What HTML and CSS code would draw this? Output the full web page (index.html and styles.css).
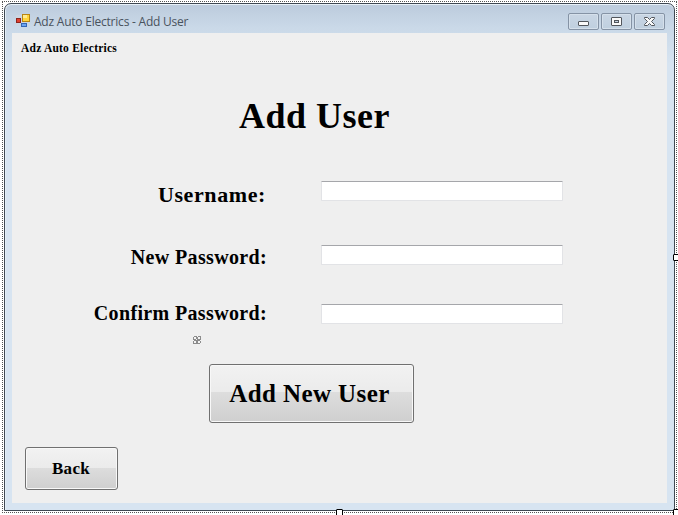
FILE: index.html
```html
<!DOCTYPE html>
<html lang="en">
<head>
<meta charset="utf-8">
<title>Adz Auto Electrics - Add User</title>
<link rel="stylesheet" href="styles.css">
</head>
<body>
<div class="designer">
  <main class="window">
    <header class="titlebar">
      <svg class="app-icon" width="14" height="14" viewBox="0 0 14 14" shape-rendering="crispEdges">
        <rect x="0" y="1" width="13" height="11" fill="#cbd6e2"/>
        <rect x="0" y="4" width="5" height="5" fill="#8e241c"/>
        <rect x="1" y="5" width="3" height="3" fill="#e04030"/>
        <rect x="6" y="0" width="8" height="8" fill="#b98512"/>
        <rect x="7" y="1" width="6" height="6" fill="#ffd43b"/>
        <rect x="7" y="1" width="4" height="3" fill="#ffeb91"/>
        <rect x="5" y="9" width="6" height="4" fill="#3566b5"/>
        <rect x="6" y="10" width="4" height="2" fill="#6ba4f0"/>
      </svg>
      <h1 class="caption">Adz Auto Electrics - Add User</h1>
      <div class="controls">
        <span class="control"><svg width="29" height="15" viewBox="0 0 29 15"><rect x="9.500" y="7.500" width="10" height="4" rx=".5" fill="#fafafa" stroke="#52565c"/></svg></span>
        <span class="control"><svg width="29" height="15" viewBox="0 0 29 15"><rect x="9.500" y="3.500" width="10" height="8" rx=".5" fill="#fafafa" stroke="#52565c"/><rect x="12.500" y="6.500" width="4" height="2" fill="#c5d2e0" stroke="#52565c"/></svg></span>
        <span class="control"><svg width="29" height="15" viewBox="0 0 29 15"><path d="M9.500 3.500h3l2 2 2-2h3v1l-3 3 3 3v1h-3l-2-2-2 2h-3v-1l3-3-3-3z" fill="#fafafa" stroke="#52565c"/></svg></span>
      </div>
    </header>
    <section class="client">
      <div class="brand">Adz Auto Electrics</div>
      <h2 class="heading">Add User</h2>
      <form class="form">
        <div class="row"><label class="label label-user" for="user">Username:</label><input class="field" id="user" type="text"></div>
        <div class="row row-new"><label class="label" for="pass">New Password:</label><input class="field" id="pass" type="password"></div>
        <div class="row row-confirm"><label class="label" for="confirm">Confirm Password:</label><input class="field" id="confirm" type="password"></div>
        <svg class="move" width="8" height="8" viewBox="0 0 8 8" shape-rendering="crispEdges"><path d="M1 0h7v7h-1v1h-7v-7h1z" fill="#8c8c8c"/><path d="M1 1h2v2h-2zM5 1h2v2h-2zM1 5h2v2h-2zM5 5h2v2h-2zM3 3h1v1h-1zM4 0h1v1h-1zM0 4h1v1h-1zM7 4h1v1h-1z" fill="#f4f4f4"/></svg>
        <button class="btn btn-add" type="button">Add New User</button>
        <button class="btn btn-back" type="button">Back</button>
      </form>
    </section>
  </main>
  <i class="handle handle-right"></i>
  <i class="handle handle-bottom"></i>
  <i class="handle handle-corner"></i>
</div>
</body>
</html>
```
FILE: styles.css
```css
* { box-sizing: border-box; }
body { margin: 0; width: 678px; height: 515px; overflow: hidden; background: #fff; }
.designer {
  position: relative;
  width: 675px;
  height: 512px;
  margin: 1px 0 0 2px;
  padding: 1px;
  border: 1px dotted #555;
  display: flow-root;
}
.window {
  width: 671px;
  height: 508px;
  border: 1px solid #3f4852;
  border-radius: 7px 7px 0 0;
  padding: 0 7px 7px;
  background: linear-gradient(#bccbdc 0, #cad9e8 24px, #d7e4f1 60px);
  box-shadow: inset 0 1px #e9f1f8, inset 1px 0 #e4eef6;
}
.titlebar { height: 29px; display: flex; align-items: flex-start; }
.app-icon { margin: 10px 0 0 4px; }
.caption {
  margin: 9px 0 0 4px;
  font: 12px/17px "Open Sans", sans-serif;
  letter-spacing: -.22px;
  color: #4a535e;
  white-space: nowrap;
}
.controls { display: flex; gap: 2px; margin: 9px 2px 0 auto; }
.control {
  width: 31px;
  height: 17px;
  border: 1px solid #8593a5;
  border-radius: 2px;
  background: linear-gradient(#c9d6e4, #bfcfdf);
  box-shadow: inset 0 0 0 1px #d5e0eb;
}
.control svg { display: block; }
.client {
  height: 470px;
  background: #efefef;
  font-family: "Liberation Serif", serif;
  font-weight: bold;
  color: #000;
}
.brand { padding: 8px 0 0 9px; font-size: 11.5px; line-height: 14px; letter-spacing: .22px; }
.heading { margin: 40px 0 0 227px; font-size: 36px; line-height: 42px; letter-spacing: .5px; }
.form { display: flex; flex-direction: column; align-items: flex-start; margin-top: 44px; }
.row { display: flex; height: 24px; }
.row-new { margin-top: 40px; }
.row-confirm { margin-top: 34px; }
.label { width: 255px; text-align: right; font-size: 20px; line-height: 24px; letter-spacing: .35px; white-space: nowrap; }
.label-user { width: 254px; font-size: 22px; line-height: 27px; letter-spacing: .6px; }
.row-confirm .label { line-height: 20px; }
.field {
  width: 242px;
  height: 20px;
  margin: 0 0 0 54px;
  padding: 1px 3px;
  border: 1px solid #e2e3e6;
  border-top-color: #a5a6aa;
  border-radius: 1px;
  background: #fff;
}
.label-user + .field { margin-left: 55px; }
.row-confirm .field { margin-top: 1px; }
.move { margin: 9px 0 0 181px; }
.btn {
  border: 1px solid #707070;
  border-radius: 3px;
  padding: 0;
  font: bold 25px/30px "Liberation Serif", serif;
  color: #000;
  background: linear-gradient(#f2f2f2 0, #ebebeb 48%, #dddddd 48%, #cfcfcf 100%);
  box-shadow: inset 0 0 0 1px #f8f8f8;
}
.btn-add { width: 205px; height: 59px; margin: 20px 0 0 197px; padding-right: 4px; letter-spacing: .4px; }
.btn-back { width: 93px; height: 43px; margin: 24px 0 0 13px; padding-right: 1px; font-size: 17px; letter-spacing: .3px; }
.handle { position: absolute; width: 7px; height: 7px; border: 1px solid #000; border-radius: 1px; background: #fff; }
.handle-right { left: 670px; top: 252px; }
.handle-bottom { left: 333px; top: 507px; }
.handle-corner { left: 670px; top: 507px; }
```
